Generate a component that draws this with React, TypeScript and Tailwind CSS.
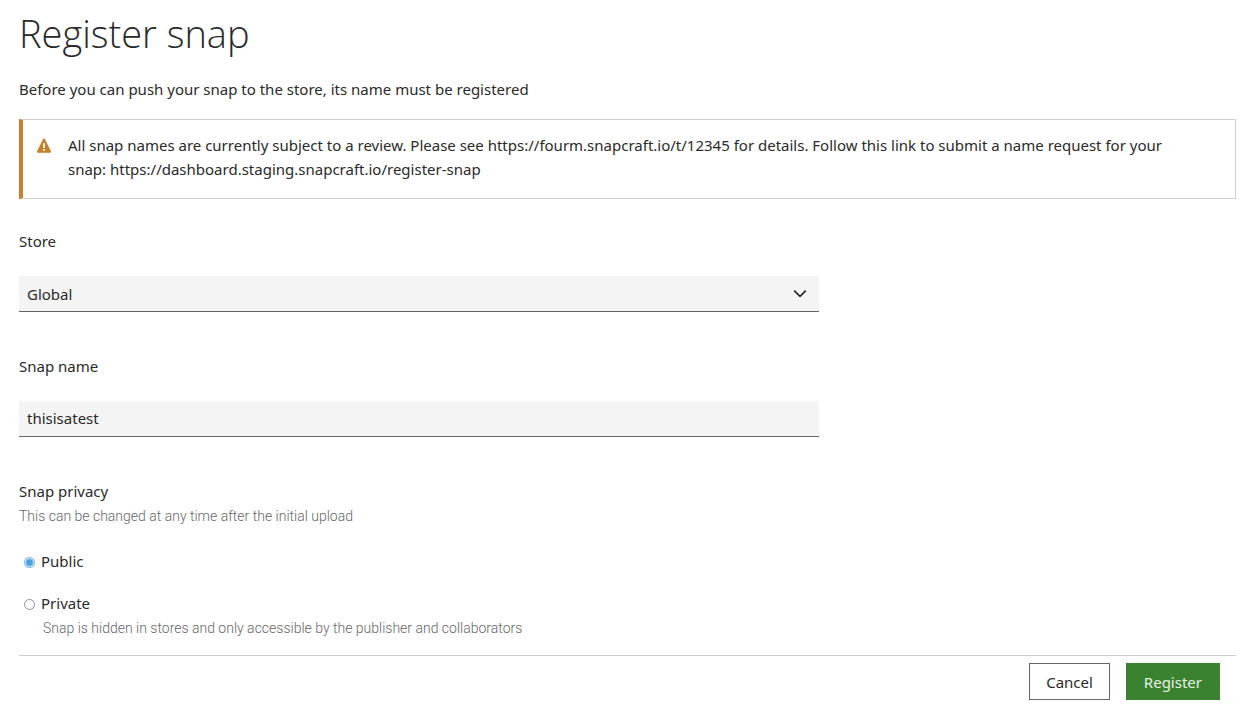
import React, { useState } from "react";

const STORES = ["Global"];

const labelClass = "block text-[15px] leading-6";
const fieldClass =
  "h-9 w-full appearance-none rounded-none border-b border-[#666] bg-[#f4f4f4] px-2 text-[15px] leading-6 outline-none";
const helpClass =
  "font-['Roboto','Noto_Sans',sans-serif] text-[14px] leading-[26px] font-light text-[#666]";

function WarningIcon() {
  return (
    <svg
      viewBox="0 0 16 16"
      className="mt-[5px] size-4 shrink-0"
      aria-hidden="true"
    >
      <path
        d="M8.9 1.1l6 12.2c.3.7 0 1.5-.9 1.5H2c-.9 0-1.200-.8-.9-1.500l6-12.200c.4-.8 1.400-.8 1.800 0z"
        fill="#c7802c"
      />
      <path d="M7 5h2v5H7zM7 11h2v2H7z" fill="#f8ecdc" />
    </svg>
  );
}

function Notification({ children }: { children: React.ReactNode }) {
  return (
    <div
      role="alert"
      className="mt-[18px] flex gap-4 border border-l-4 border-[#d0d0d0] border-l-[#c7802c] pt-[13px] pr-14 pb-[17px] pl-[13px] text-[15px] leading-6"
    >
      <WarningIcon />
      <p>{children}</p>
    </div>
  );
}

type PrivacyOptionProps = {
  value: string;
  label: string;
  help?: string;
  checked: boolean;
  onChange: (value: string) => void;
};

function PrivacyOption({ value, label, help, checked, onChange }: PrivacyOptionProps) {
  return (
    <div>
      <label className="flex w-fit items-center gap-1.5 pl-[5px] text-[15px] leading-6">
        <input
          type="radio"
          name="privacy"
          value={value}
          checked={checked}
          onChange={() => onChange(value)}
          className="mt-[3px] size-[11px] appearance-none rounded-full border border-[#8f8f9d] bg-white checked:border-[#62b0e8] checked:bg-[radial-gradient(circle,#4aa3e6_3px,#d3eafa_4px)]"
        />
        {label}
      </label>
      {help && <p className={`pl-6 ${helpClass}`}>{help}</p>}
    </div>
  );
}

export default function App() {
  const [store, setStore] = useState("Global");
  const [snapName, setSnapName] = useState("thisisatest");
  const [privacy, setPrivacy] = useState("public");

  return (
    <main className="min-h-screen bg-white pt-[7px] pr-3.5 pb-6 pl-[19px] font-['Noto_Sans','Open_Sans',sans-serif] text-[#2a2a2a]">
      <h1 className="font-['Open_Sans','Noto_Sans',sans-serif] text-[38px] leading-[52px] font-light">
        Register snap
      </h1>
      <p className="mt-[18px] text-[15px] leading-6">
        Before you can push your snap to the store, its name must be registered
      </p>

      <Notification>
        All snap names are currently subject to a review. Please see
        https://fourm.snapcraft.io/t/12345 for details. Follow this link to
        submit a name request for your snap:
        https://dashboard.staging.snapcraft.io/register-snap
      </Notification>

      <form onSubmit={(e) => e.preventDefault()}>
        <div className="mt-[30px] max-w-[800px]">
          <label htmlFor="store" className={labelClass}>
            Store
          </label>
          <div className="relative mt-[23px]">
            <select
              id="store"
              value={store}
              onChange={(e) => setStore(e.target.value)}
              className={fieldClass}
            >
              {STORES.map((s) => (
                <option key={s}>{s}</option>
              ))}
            </select>
            <svg
              viewBox="0 0 16 16"
              className="pointer-events-none absolute top-2.5 right-[11px] size-4"
              fill="none"
              stroke="#222"
              strokeWidth="1.6"
              aria-hidden="true"
            >
              <path d="M2.200 4.700L8 10.300l5.800-5.600" />
            </svg>
          </div>
        </div>

        <div className="mt-[42px] max-w-[800px]">
          <label htmlFor="snap-name" className={labelClass}>
            Snap name
          </label>
          <input
            id="snap-name"
            type="text"
            value={snapName}
            onChange={(e) => setSnapName(e.target.value)}
            className={`mt-[23px] block pb-0.5 ${fieldClass}`}
          />
        </div>

        <fieldset className="mt-[42px]">
          <legend className={labelClass}>Snap privacy</legend>
          <p className={helpClass}>
            This can be changed at any time after the initial upload
          </p>
          <div className="mt-5 flex flex-col gap-[18px]">
            <PrivacyOption
              value="public"
              label="Public"
              checked={privacy === "public"}
              onChange={setPrivacy}
            />
            <PrivacyOption
              value="private"
              label="Private"
              help="Snap is hidden in stores and only accessible by the publisher and collaborators"
              checked={privacy === "private"}
              onChange={setPrivacy}
            />
          </div>
        </fieldset>

        <div className="mt-3.5 flex justify-end gap-4 border-t border-[#cdcdcd] pt-[7px] pr-4 text-[15px] leading-6">
          <button
            type="button"
            className="h-[37px] border border-[#666] bg-white px-4"
          >
            Cancel
          </button>
          <button
            type="submit"
            className="h-[37px] bg-[#3a8230] px-[18px] text-[#e4f2e2]"
          >
            Register
          </button>
        </div>
      </form>
    </main>
  );
}
